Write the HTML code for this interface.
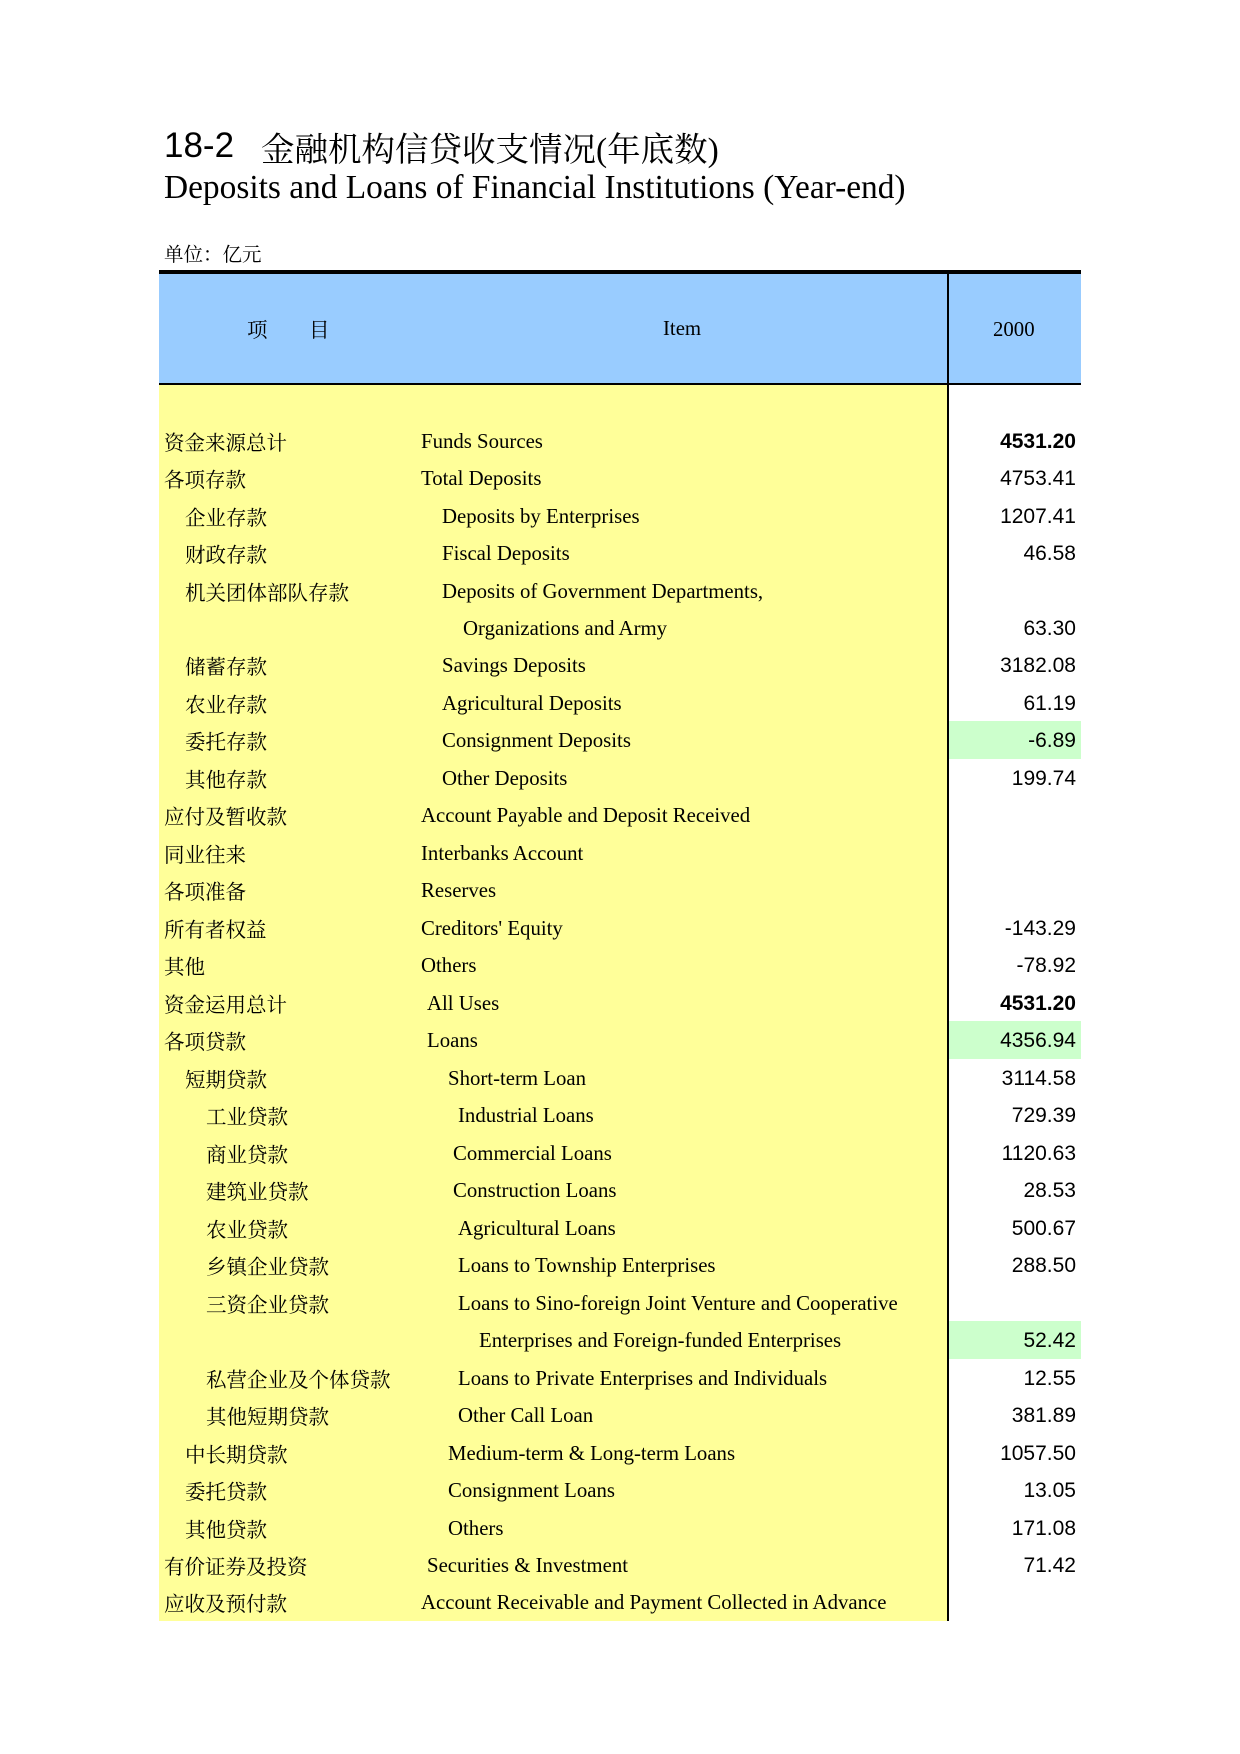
<!DOCTYPE html>
<html><head><meta charset="utf-8"><style>
body{margin:0;background:#fff;width:1240px;height:1754px;position:relative;overflow:hidden}
.a{position:absolute;white-space:nowrap}
.cn{font-family:"Liberation Serif","Noto Serif CJK SC",serif;font-size:20.5px;color:#000}
.en{font-family:"Liberation Serif",serif;font-size:20.8px;color:#000}
.nu{font-family:"Liberation Sans",sans-serif;font-size:21px;color:#000;right:164px}
</style></head><body>
<div class="a" style="left:164px;top:126px;font-family:'Liberation Sans',sans-serif;font-size:35px">18-2</div>
<div class="a" style="left:261px;top:122px;font-family:'Liberation Serif','Noto Serif CJK SC',serif;font-size:33.5px">金融机构信贷收支情况(年底数)</div>
<div class="a" style="left:164px;top:169px;font-family:'Liberation Serif',serif;font-size:33.4px">Deposits and Loans of Financial Institutions (Year-end)</div>
<div class="a cn" style="left:164px;top:239px;font-size:19.5px">单位：亿元</div>
<div class="a" style="left:159px;top:270px;width:922px;height:4px;background:#000"></div>
<div class="a" style="left:159px;top:274px;width:922px;height:109px;background:#99ccff"></div>
<div class="a" style="left:159px;top:383px;width:922px;height:2px;background:#000"></div>
<div class="a" style="left:159px;top:385px;width:789px;height:1236px;background:#ffff99"></div>
<div class="a" style="left:947px;top:274px;width:2px;height:1347px;background:#000"></div>
<div class="a cn" style="left:247px;top:313px">项</div>
<div class="a cn" style="left:309px;top:313px">目</div>
<div class="a en" style="left:663px;top:317px">Item</div>
<div class="a en" style="left:993px;top:318px">2000</div>
<div id="rows"></div>
<script>
var R=[
["资金来源总计",164,"Funds Sources",421,"4531.20",0,1],
["各项存款",164,"Total Deposits",421,"4753.41"],
["企业存款",185,"Deposits by Enterprises",442,"1207.41"],
["财政存款",185,"Fiscal Deposits",442,"46.58"],
["机关团体部队存款",185,"Deposits of Government Departments,",442,""],
["",0,"Organizations and Army",463,"63.30"],
["储蓄存款",185,"Savings Deposits",442,"3182.08"],
["农业存款",185,"Agricultural Deposits",442,"61.19"],
["委托存款",185,"Consignment Deposits",442,"-6.89",1],
["其他存款",185,"Other Deposits",442,"199.74"],
["应付及暂收款",164,"Account Payable and Deposit Received",421,""],
["同业往来",164,"Interbanks Account",421,""],
["各项准备",164,"Reserves",421,""],
["所有者权益",164,"Creditors' Equity",421,"-143.29"],
["其他",164,"Others",421,"-78.92"],
["资金运用总计",164,"All Uses",427,"4531.20",0,1],
["各项贷款",164,"Loans",427,"4356.94",1],
["短期贷款",185,"Short-term Loan",448,"3114.58"],
["工业贷款",206,"Industrial Loans",458,"729.39"],
["商业贷款",206,"Commercial Loans",453,"1120.63"],
["建筑业贷款",206,"Construction Loans",453,"28.53"],
["农业贷款",206,"Agricultural Loans",458,"500.67"],
["乡镇企业贷款",206,"Loans to Township Enterprises",458,"288.50"],
["三资企业贷款",206,"Loans to Sino-foreign Joint Venture and Cooperative",458,""],
["",0,"Enterprises and Foreign-funded Enterprises",479,"52.42",1],
["私营企业及个体贷款",206,"Loans to Private Enterprises and Individuals",458,"12.55"],
["其他短期贷款",206,"Other Call Loan",458,"381.89"],
["中长期贷款",185,"Medium-term & Long-term Loans",448,"1057.50"],
["委托贷款",185,"Consignment Loans",448,"13.05"],
["其他贷款",185,"Others",448,"171.08"],
["有价证券及投资",164,"Securities & Investment",427,"71.42"],
["应收及预付款",164,"Account Receivable and Payment Collected in Advance",421,""]
];
var h="",top0=421.6,rh=37.48;
R.forEach(function(r,i){var t=top0+i*rh;
if(r[5])h+='<div class="a" style="left:949px;top:'+t+'px;width:132px;height:'+rh+'px;background:#ccffcc"></div>';
var ty=t+8;
if(r[0])h+='<div class="a cn" style="left:'+r[1]+'px;top:'+(ty-4)+'px">'+r[0]+'</div>';
h+='<div class="a en" style="left:'+r[3]+'px;top:'+ty+'px">'+r[2]+'</div>';
if(r[4])h+='<div class="a nu" style="top:'+(ty)+'px;'+(r[6]?'font-weight:bold':'')+'">'+r[4]+'</div>';
});
document.getElementById("rows").innerHTML=h;
</script>
</body></html>
